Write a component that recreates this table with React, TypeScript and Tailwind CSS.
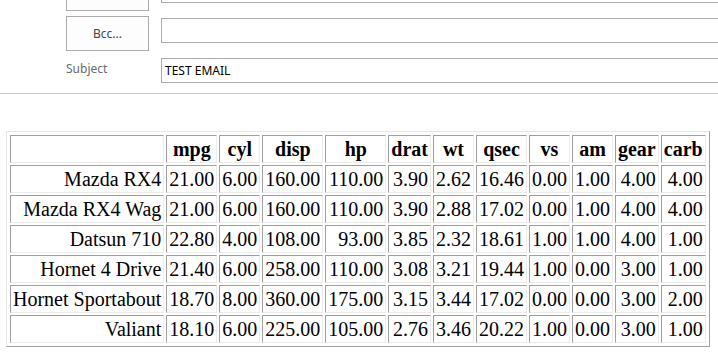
import React from "react";

const columns = ["mpg", "cyl", "disp", "hp", "drat", "wt", "qsec", "vs", "am", "gear", "carb"];

const cars: string[][] = [
  ["Mazda RX4", "21.00", "6.00", "160.00", "110.00", "3.90", "2.62", "16.46", "0.00", "1.00", "4.00", "4.00"],
  ["Mazda RX4 Wag", "21.00", "6.00", "160.00", "110.00", "3.90", "2.88", "17.02", "0.00", "1.00", "4.00", "4.00"],
  ["Datsun 710", "22.80", "4.00", "108.00", "93.00", "3.85", "2.32", "18.61", "1.00", "1.00", "4.00", "1.00"],
  ["Hornet 4 Drive", "21.40", "6.00", "258.00", "110.00", "3.08", "3.21", "19.44", "1.00", "0.00", "3.00", "1.00"],
  ["Hornet Sportabout", "18.70", "8.00", "360.00", "175.00", "3.15", "3.44", "17.02", "0.00", "0.00", "3.00", "2.00"],
  ["Valiant", "18.10", "6.00", "225.00", "105.00", "2.76", "3.46", "20.22", "1.00", "0.00", "3.00", "1.00"],
];

const cell =
  "font-['Liberation_Serif','DejaVu_Serif',serif] border border-t-[#a0a0a0] border-l-[#a0a0a0] border-b-[#ececec] border-r-[#ececec] px-[2px] py-px leading-[24px]";

function FieldButton({ label }: { label?: string }) {
  return (
    <button className="w-[83px] h-[35px] shrink-0 border border-[#ababab] bg-[#fdfdfd] text-[12px] text-[#444] font-['Noto_Sans',sans-serif]">
      {label}
    </button>
  );
}

function FieldInput({ value }: { value?: string }) {
  return (
    <div className="flex-1 h-[25px] border border-[#ababab] bg-white pl-[3px] text-[12px] leading-[23px] text-black font-['Noto_Sans',sans-serif]">
      {value}
    </div>
  );
}

export default function App() {
  return (
    <div className="w-[718px] h-[359px] overflow-hidden bg-white">
      {/* Compose header, scrolled partly out of view */}
      <div className="w-[760px] -mt-[24px] pl-[66px] flex flex-col">
        <div className="flex items-start gap-[12px]">
          <FieldButton />
          <div className="flex-1 pt-[2px] flex">
            <FieldInput />
          </div>
        </div>
        <div className="flex items-start gap-[12px] mt-[5px]">
          <FieldButton label="Bcc..." />
          <div className="flex-1 pt-[2px] flex">
            <FieldInput />
          </div>
        </div>
        <div className="flex items-center mt-[7px]">
          <div className="w-[95px] shrink-0 text-[12px] text-[#6a6a6a] -mt-[3px] font-['Noto_Sans',sans-serif]">
            Subject
          </div>
          <FieldInput value="TEST EMAIL" />
        </div>
      </div>
      <div className="mt-[10px] border-t border-[#c6c6c6]" />

      {/* Data table */}
      <table className="mt-[37px] ml-[6px] border-separate border-spacing-[2px] p-px border border-t-[#e6e6e6] border-l-[#e6e6e6] border-b-[#a0a0a0] border-r-[#a0a0a0] text-[20px] text-black">
        <thead>
          <tr>
            <th className={cell}></th>
            {columns.map((c) => (
              <th key={c} className={`${cell} font-bold text-center`}>
                {c}
              </th>
            ))}
          </tr>
        </thead>
        <tbody>
          {cars.map((row) => (
            <tr key={row[0]}>
              {row.map((v, i) => (
                <td key={i} className={`${cell} text-right whitespace-nowrap`}>
                  {v}
                </td>
              ))}
            </tr>
          ))}
        </tbody>
      </table>
    </div>
  );
}
